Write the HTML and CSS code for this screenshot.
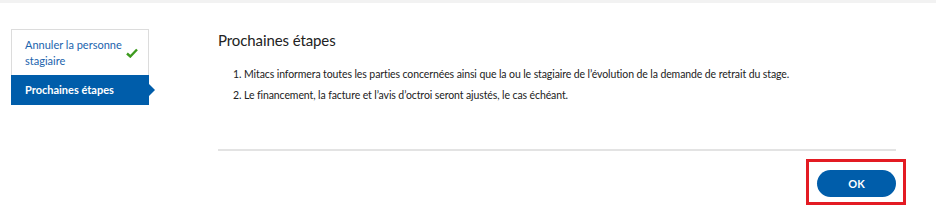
FILE: index.html
```html
<!DOCTYPE html>
<html lang="fr">
<head>
    <meta charset="UTF-8">
    <meta name="viewport" content="width=device-width, initial-scale=1.0">
    <link rel="stylesheet" href="styles.css">
    <title>Retrait du stage</title>
</head>
<body>
    <div class="top-bar"></div>
    <div class="page">
        <div class="steps">
            <div class="step done">
                <span>Annuler la personne stagiaire</span>
                <svg class="check" width="12" height="10" viewBox="0 0 12 10">
                    <path d="M1 5.5 L4.3 8.5 L11 1.5" fill="none" stroke="#3d9a1e" stroke-width="2.4"/>
                </svg>
            </div>
            <div class="step active">Prochaines étapes</div>
        </div>
        <div class="content">
            <h2 class="title">Prochaines étapes</h2>
            <ol class="list">
                <li>Mitacs informera toutes les parties concernées ainsi que la ou le stagiaire de l’évolution de la demande de retrait du stage.</li>
                <li>Le financement, la facture et l’avis d’octroi seront ajustés, le cas échéant.</li>
            </ol>
            <div class="actions">
                <button class="btn-ok">OK</button>
                <div class="highlight"></div>
            </div>
        </div>
    </div>
</body>
</html>
```

FILE: styles.css
```css
body{
    margin: 0;
    padding: 0;
    background-color: #fff;
    font-family: Lato, "Open Sans", sans-serif;
    color: #222;
}
.top-bar{
    height: 3px;
    background-color: #f2f2f2;
}
.page{
    display: flex;
    align-items: flex-start;
}
.steps{
    width: 136px;
    margin-left: 11px;
    margin-top: 26px;
    border: 1px solid #dcdcdc;
    border-bottom: none;
}
.step{
    font-size: 11px;
    line-height: 16px;
    padding: 0 13px;
}
.step.done{
    display: flex;
    align-items: center;
    justify-content: space-between;
    height: 45px;
    padding-right: 10px;
    color: #1a63ad;
}
.step.done span{
    width: 100px;
}
.step.active{
    position: relative;
    height: 30px;
    line-height: 30px;
    margin: 0 -1px;
    padding-left: 14px;
    background-color: #005daa;
    color: #fff;
    font-weight: bold;
}
.step.active::after{
    content: "";
    position: absolute;
    top: 9px;
    right: -6px;
    border-left: 6px solid #005daa;
    border-top: 6px solid transparent;
    border-bottom: 6px solid transparent;
}
.content{
    width: 678px;
    margin-left: 69px;
    padding-top: 26px;
}
.title{
    margin: 0;
    font-size: 15px;
    line-height: 22px;
    letter-spacing: -0.1px;
    font-weight: normal;
    color: #222;
}
.list{
    margin: 13px 0 0;
    padding: 0 0 0 26px;
    font-size: 10.5px;
    line-height: 21px;
    letter-spacing: -0.1px;
    color: #222;
}
.actions{
    position: relative;
    display: flex;
    justify-content: flex-end;
    margin-top: 43px;
    padding: 19px 0 8px;
    border-top: 2px solid #e3e3e3;
}
.btn-ok{
    width: 79px;
    height: 27px;
    border: none;
    border-radius: 14px;
    background-color: #005daa;
    color: #fff;
    font-family: Lato, sans-serif;
    font-size: 11px;
    font-weight: bold;
}
.highlight{
    position: absolute;
    top: 8px;
    bottom: 0;
    right: -10px;
    width: 94px;
    border: 3px solid #e31b23;
}
```
